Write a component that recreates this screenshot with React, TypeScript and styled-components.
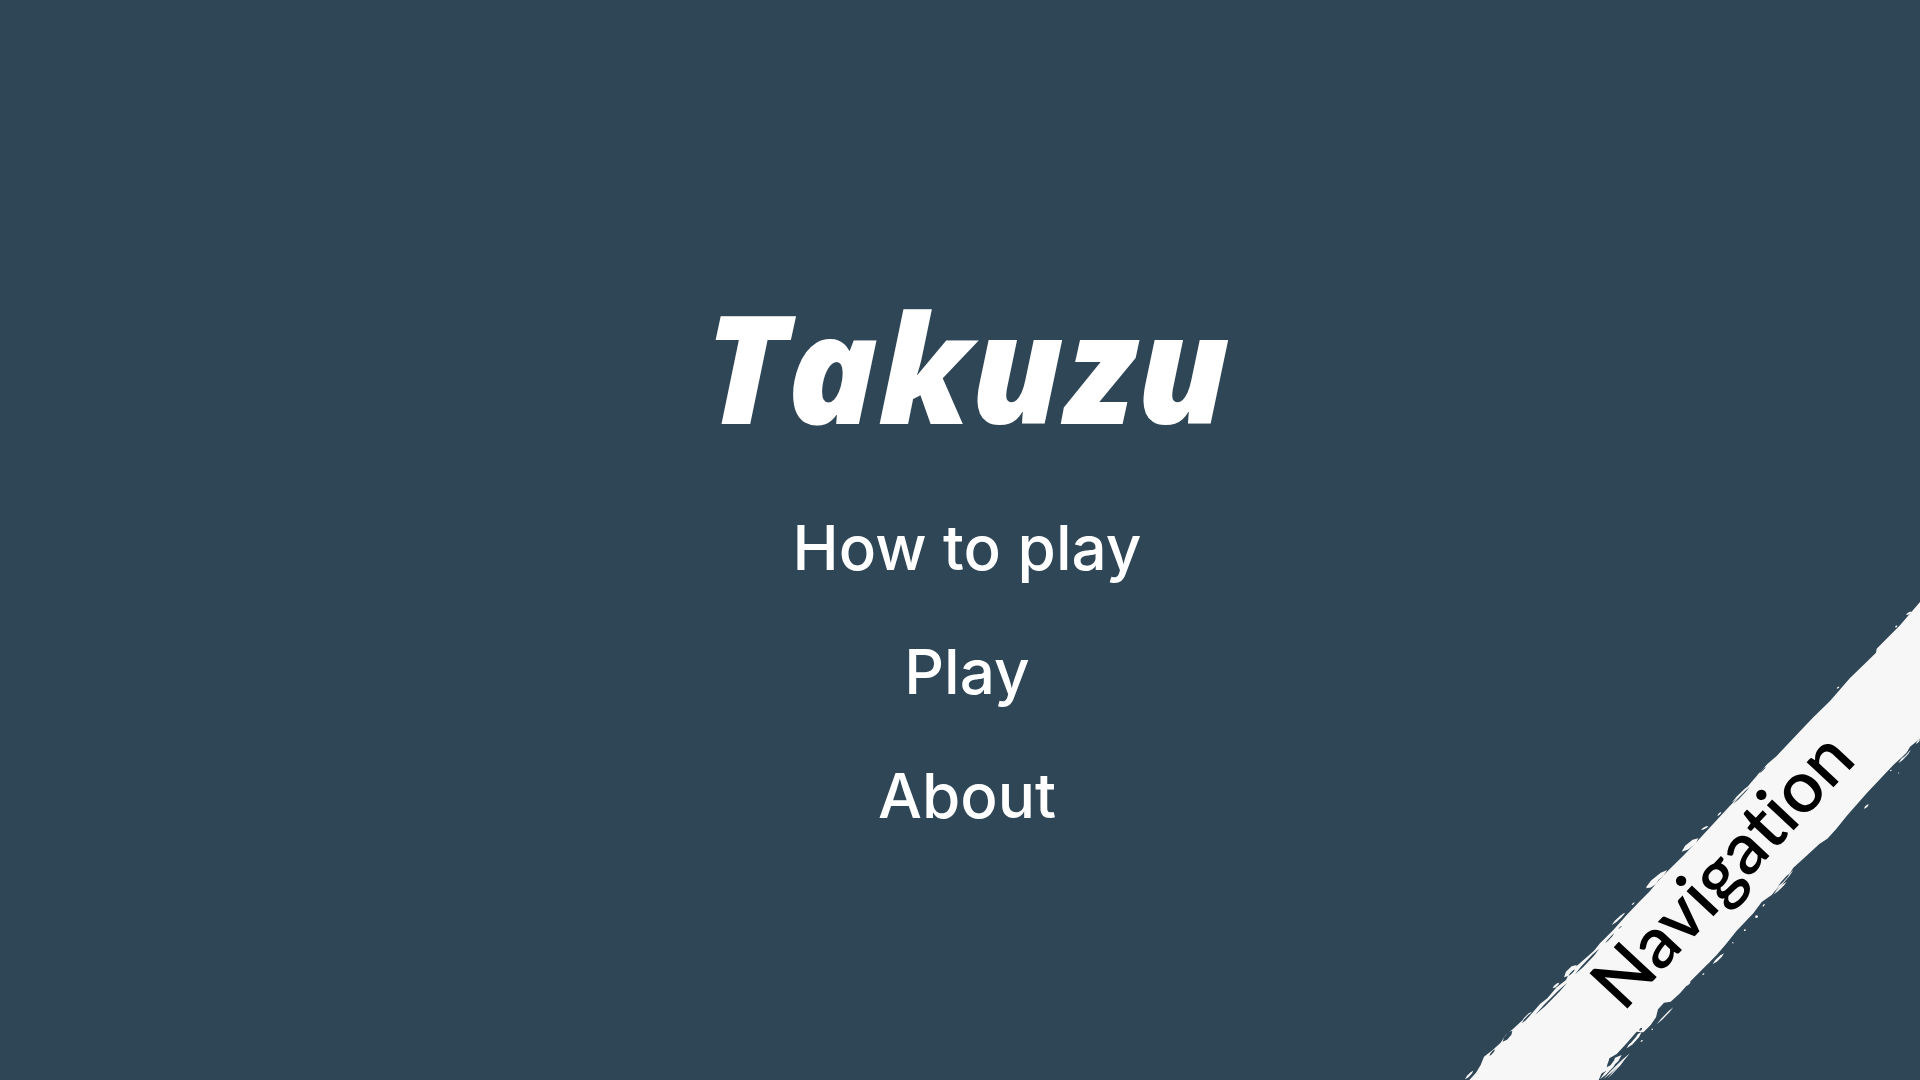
import React from "react";
import styled, { createGlobalStyle } from "styled-components";

const colors = {
  slate: "#2f4656",
  paper: "#f7f7f7",
  ink: "#000000",
};

const GlobalStyle = createGlobalStyle`
  body {
    margin: 0;
    background: ${colors.slate};
  }
`;

const Page = styled.main`
  position: relative;
  box-sizing: border-box;
  min-height: 100vh;
  padding: 32px 0 0 14px;
  overflow: hidden;
  display: flex;
  flex-direction: column;
  align-items: center;
  justify-content: center;
  gap: 72px;
  background: ${colors.slate};
  color: #ffffff;
`;

const Title = styled.h1`
  margin: 0;
  font: italic 800 150px/160px "Open Sans", sans-serif;
`;

const Menu = styled.nav`
  display: flex;
  flex-direction: column;
  align-items: center;
  gap: 64px;
`;

const MenuLink = styled.a`
  color: inherit;
  text-decoration: none;
  font: 500 62px/60px Inter, sans-serif;
`;

const RibbonButton = styled.button`
  position: absolute;
  right: 0;
  bottom: 0;
  box-sizing: border-box;
  width: 460px;
  height: 480px;
  padding: 56px 0 0 60px;
  border: 0;
  background: none;
  display: grid;
  place-items: center;
  cursor: pointer;
`;

const BrushStroke = styled.svg`
  position: absolute;
  inset: 0;
  width: 100%;
  height: 100%;
`;

const RibbonLabel = styled.span`
  position: relative;
  color: ${colors.ink};
  font: 600 72px/80px Lato, sans-serif;
  font-variant-ligatures: none;
  transform: rotate(-47deg);
`;

type Bristle = [x1: number, y1: number, x2: number, y2: number, width: number];

const looseBristles: Bristle[] = [
  [15, 1438, 40, 1412, 6], [185, 1265, 215, 1235, 6], [278, 1165, 298, 1148, 6],
  [312, 1132, 350, 1095, 16], [455, 975, 493, 940, 6], [515, 915, 523, 908, 3],
  [558, 865, 595, 840, 12], [475, 958, 495, 938, 4], [515, 915, 524, 907, 3],
  [558, 862, 622, 810, 12], [665, 755, 715, 715, 15], [723, 690, 745, 678, 5],
  [772, 648, 784, 636, 4], [815, 608, 870, 555, 6], [890, 528, 918, 505, 4],
  [895, 530, 918, 505, 4], [1130, 266, 1138, 260, 4], [1305, 82, 1312, 77, 4],
  [1338, 45, 1355, 35, 6], [590, 1273, 640, 1222, 4], [500, 1345, 545, 1295, 10],
  [425, 1420, 485, 1365, 14], [430, 1438, 510, 1360, 5], [420, 1438, 470, 1385, 7],
  [442, 1436, 492, 1382, 3], [542, 1326, 548, 1320, 4], [575, 1290, 578, 1286, 4],
  [945, 875, 1000, 810, 5], [940, 884, 980, 845, 5], [908, 920, 914, 912, 4],
  [885, 952, 894, 948, 7], [758, 1092, 792, 1060, 7], [740, 1092, 750, 1082, 4],
  [727, 1125, 733, 1120, 3], [678, 1158, 692, 1145, 5], [852, 993, 857, 988, 5],
  [817, 1030, 820, 1027, 4], [1315, 490, 1352, 450, 6], [1368, 432, 1380, 418, 4],
  [1290, 513, 1295, 510, 3], [1314, 520, 1318, 518, 3], [1212, 626, 1226, 613, 5],
];

const gaps: Bristle[] = [
  [225, 1245, 322, 1148, 5], [345, 1123, 418, 1046, 6], [435, 1030, 463, 1000, 3],
  [475, 987, 486, 977, 2], [185, 1270, 215, 1238, 5], [128, 1325, 157, 1292, 12],
  [88, 1368, 105, 1348, 5], [325, 1128, 345, 1108, 4], [500, 1338, 535, 1298, 6],
  [440, 1402, 465, 1370, 10], [538, 1292, 546, 1284, 6], [955, 858, 990, 820, 5],
  [1325, 476, 1350, 450, 3], [898, 520, 918, 500, 3], [820, 612, 870, 560, 3],
];

function bristlePath([x1, y1, x2, y2, width]: Bristle) {
  const length = Math.hypot(x2 - x1, y2 - y1);
  const nx = ((y2 - y1) / length) * width * 0.5;
  const ny = (-(x2 - x1) / length) * width * 0.5;
  const ax = x1 + (x2 - x1) * 0.3;
  const ay = y1 + (y2 - y1) * 0.3;
  const bx = x1 + (x2 - x1) * 0.75;
  const by = y1 + (y2 - y1) * 0.75;
  return `M${x1} ${y1} L${ax + nx} ${ay + ny} L${bx + nx} ${by + ny} L${x2} ${y2} L${bx - nx} ${by - ny} L${ax - nx} ${ay - ny}Z`;
}

const menuItems = [
  { label: "How to play", href: "#how-to-play" },
  { label: "Play", href: "#play" },
  { label: "About", href: "#about" },
];

function NavigationRibbon() {
  return (
    <RibbonButton type="button">
      <BrushStroke viewBox="0 0 1380 1440" aria-hidden="true">
        <path
          fill={colors.paper}
          d="M28 1440 L48 1418 L62 1395 L72 1370 L98 1350 L122 1328 L136 1306 L158 1288 L184 1264 L214 1242 L240 1212 L262 1195 L290 1162 L318 1140 L330 1115 L350 1098 L380 1072 L402 1052 L420 1030 L460 990 L500 945 L540 903 L570 873 L595 842 L630 806 L672 765 L715 720 L760 671 L810 617 L845 582 L875 545 L922 492 L950 468 L1020 394 L1060 352 L1110 303 L1170 234 L1222 184 L1248 158 L1250 146 L1320 76 L1380 6 L1380 416 L1350 440 L1340 458 L1300 495 L1220 580 L1160 648 L1128 688 L1102 716 L1078 732 L1020 785 L1000 803 L988 822 L962 852 L935 885 L905 906 L880 940 L830 992 L800 1030 L770 1065 L720 1115 L690 1145 L660 1180 L632 1205 L612 1208 L594 1228 L588 1252 L572 1275 L550 1297 L530 1295 L500 1330 L470 1362 L448 1375 L442 1398 L424 1422 L416 1440Z"
        />
        <path fill={colors.paper} d={looseBristles.map(bristlePath).join(" ")} />
        <path fill={colors.slate} d={gaps.map(bristlePath).join(" ")} />
      </BrushStroke>
      <RibbonLabel>Navigation</RibbonLabel>
    </RibbonButton>
  );
}

export default function App() {
  return (
    <>
      <GlobalStyle />
      <Page>
        <Title>Takuzu</Title>
        <Menu aria-label="Main menu">
          {menuItems.map((item) => (
            <MenuLink key={item.href} href={item.href}>
              {item.label}
            </MenuLink>
          ))}
        </Menu>
        <NavigationRibbon />
      </Page>
    </>
  );
}
